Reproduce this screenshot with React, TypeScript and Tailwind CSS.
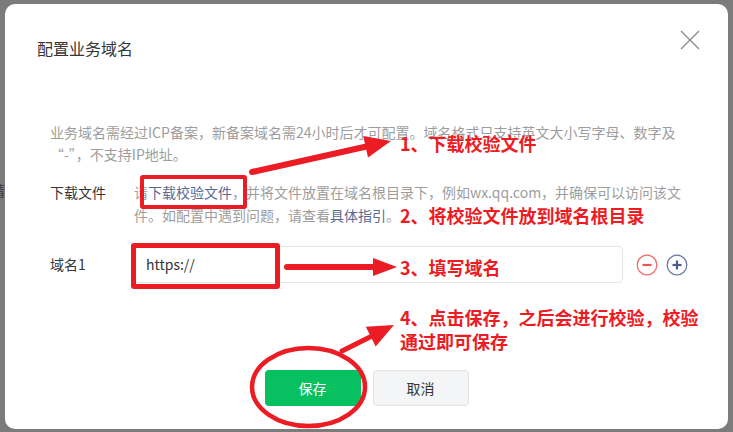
import React from "react";

const RED = "#ec1c24";

function Arrow({ x1, y1, x2, y2, w = 5, head = 24, hw = 11 }: { x1: number; y1: number; x2: number; y2: number; w?: number; head?: number; hw?: number }) {
  const dx = x2 - x1;
  const dy = y2 - y1;
  const len = Math.sqrt(dx * dx + dy * dy);
  const ux = dx / len;
  const uy = dy / len;
  const px = -uy;
  const py = ux;
  const bx = x2 - ux * head;
  const by = y2 - uy * head;
  const pts = [
    [x2, y2],
    [bx + px * hw, by + py * hw],
    [bx - px * hw, by - py * hw],
  ]
    .map((p) => p.join(","))
    .join(" ");
  return (
    <g>
      <line x1={x1} y1={y1} x2={bx + ux * 2} y2={by + uy * 2} stroke={RED} strokeWidth={w} strokeLinecap="round" />
      <polygon points={pts} fill={RED} />
    </g>
  );
}

export default function App() {
  const font = { fontFamily: '"Noto Sans CJK SC", "Noto Sans", "Liberation Sans", sans-serif' };
  return (
    <div className="relative w-[733px] h-[432px] overflow-hidden bg-[#7b7b7b] pt-[4px] pl-[5px] pr-[5px] pb-[3px]" style={font}>
      <span className="absolute left-[-9px] top-[180px] text-[14px] leading-[20px] text-[#3a3a3a]">请</span>
      <div className="relative h-full rounded-[10px] bg-white flex flex-col">
        <div className="pl-[32px] pt-[32px] text-[16px] leading-[24px] text-[#353535]">配置业务域名</div>
        <button className="absolute right-[28px] top-[26px] w-[20px] h-[20px]" aria-label="close">
          <svg width="20" height="20" viewBox="0 0 20 20">
            <path d="M1 1 L19 19 M19 1 L1 19" stroke="#8a8a8a" strokeWidth="1.3" fill="none" />
          </svg>
        </button>
        <div className="pl-[45px] pr-[40px] mt-[61px] text-[14px] leading-[22px] text-[#9d9d9d]">
          业务域名需经过ICP备案，新备案域名需24小时后才可配置。域名格式只支持英文大小写字母、数字及
          <br />
          “-”，不支持IP地址。
        </div>
        <div className="flex pl-[45px] mt-[16px] text-[14px] leading-[23px]">
          <div className="w-[84px] shrink-0 text-[#353535]">下载文件</div>
          <div className="text-[#9d9d9d] whitespace-nowrap">
            请<span className="text-[#576b95]">下载校验文件</span>，并将文件放置在域名根目录下，例如wx.qq.com，并确保可以访问该文
            <br />
            件。如配置中遇到问题，请查看<span className="text-[#576b95]">具体指引</span>。
          </div>
        </div>
        <div className="flex items-center pl-[45px] mt-[19px]">
          <div className="w-[84px] shrink-0 text-[14px] text-[#353535]">域名1</div>
          <div className="w-[489px] h-[37px] border border-[#e5e5e5] rounded-[4px] flex items-center px-[11px] text-[14px] text-[#353535]">
            https://
          </div>
          <svg className="ml-[13px]" width="22" height="22" viewBox="0 0 22 22">
            <circle cx="11" cy="11" r="9.8" stroke="#f56a6a" strokeWidth="1.3" fill="none" />
            <line x1="6.5" y1="11" x2="15.5" y2="11" stroke="#f25454" strokeWidth="2.2" />
          </svg>
          <svg className="ml-[8px]" width="22" height="22" viewBox="0 0 22 22">
            <circle cx="11" cy="11" r="9.8" stroke="#6b7ba3" strokeWidth="1.3" fill="none" />
            <line x1="6.5" y1="11" x2="15.5" y2="11" stroke="#4b5d8a" strokeWidth="2.2" />
            <line x1="11" y1="6.5" x2="11" y2="15.5" stroke="#4b5d8a" strokeWidth="2.2" />
          </svg>
        </div>
        <div className="flex justify-center gap-[12px] mt-[87px]">
          <button className="w-[96px] h-[36px] rounded-[4px] bg-[#07c160] text-white text-[14px]">保存</button>
          <button className="w-[96px] h-[36px] rounded-[4px] bg-[#f4f5f7] border border-[#e2e3e5] text-[#353535] text-[14px]">取消</button>
        </div>
      </div>

      {/* annotations */}
      <div className="absolute left-[140px] top-[175px] w-[107px] h-[34px] border-[4px] border-[#ec1c24] rounded-[3px]" />
      <div className="absolute left-[131px] top-[243px] w-[149px] h-[46px] border-[5px] border-[#ec1c24] rounded-[3px]" />
      <svg className="absolute left-0 top-0" width="733" height="432" viewBox="0 0 733 432">
        <Arrow x1={252} y1={172} x2={391} y2={141} w={6} head={26} hw={11} />
        <Arrow x1={287} y1={267} x2={397} y2={267} w={6} head={24} hw={9} />
        <Arrow x1={342} y1={351} x2={394} y2={325} w={5} head={26} hw={11} />
        <ellipse cx="308.5" cy="387" rx="56.5" ry="39" stroke={RED} strokeWidth="4.5" fill="none" />
      </svg>
      <div className="absolute left-[400px] top-[131px] text-[18px] leading-[24px] font-bold text-[#ec1c24] whitespace-nowrap">1、下载校验文件</div>
      <div className="absolute left-[400px] top-[203px] text-[18px] leading-[24px] font-bold text-[#ec1c24] whitespace-nowrap">2、将校验文件放到域名根目录</div>
      <div className="absolute left-[400px] top-[255px] text-[18px] leading-[24px] font-bold text-[#ec1c24] whitespace-nowrap">3、填写域名</div>
      <div className="absolute left-[400px] top-[305px] text-[18px] leading-[24px] font-bold text-[#ec1c24] whitespace-nowrap">
        4、点击保存，之后会进行校验，校验
        <br />
        通过即可保存
      </div>
    </div>
  );
}
